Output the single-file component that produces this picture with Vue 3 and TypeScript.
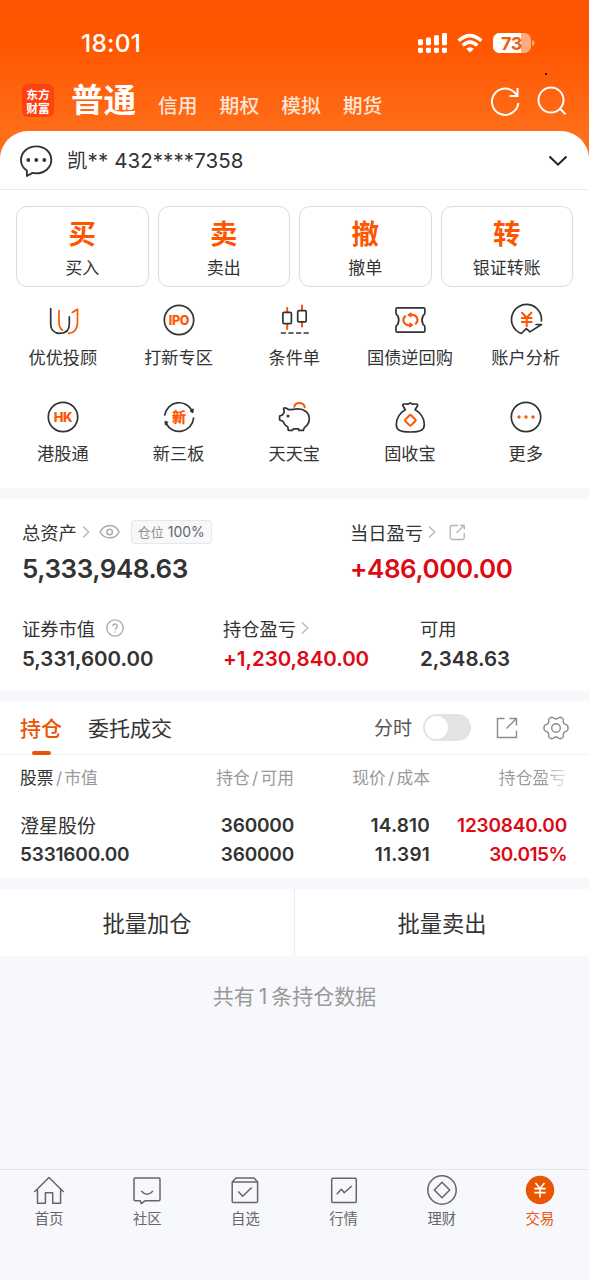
<script setup lang="ts">
interface Action { mark: string; label: string }
interface Entry { icon: string; label: string }

const markets: string[] = ['信用', '期权', '模拟', '期货']

const actions: Action[] = [
  { mark: '买', label: '买入' },
  { mark: '卖', label: '卖出' },
  { mark: '撤', label: '撤单' },
  { mark: '转', label: '银证转账' },
]

const services: Entry[] = [
  { icon: 'advisor', label: '优优投顾' },
  { icon: 'ipo', label: '打新专区' },
  { icon: 'candle', label: '条件单' },
  { icon: 'ticket', label: '国债逆回购' },
  { icon: 'analysis', label: '账户分析' },
  { icon: 'hk', label: '港股通' },
  { icon: 'neeq', label: '新三板' },
  { icon: 'pig', label: '天天宝' },
  { icon: 'bag', label: '固收宝' },
  { icon: 'more', label: '更多' },
]

const tabs: Entry[] = [
  { icon: 'home', label: '首页' },
  { icon: 'chat', label: '社区' },
  { icon: 'check', label: '自选' },
  { icon: 'chart', label: '行情' },
  { icon: 'wealth', label: '理财' },
  { icon: 'trade', label: '交易' },
]
</script>

<template>
  <div class="app">
    <header class="top">
      <div class="status">
        <span class="clock">18:01</span>
        <svg class="status-icons" width="120" height="24" viewBox="415 31 120 24">
          <g fill="#fff">
            <rect x="418" y="39.3" width="5" height="6" rx="1.4" />
            <rect x="426" y="37.5" width="5" height="7.8" rx="1.4" />
            <rect x="434" y="35.2" width="5" height="10.1" rx="1.4" />
            <rect x="442" y="33" width="5" height="12.3" rx="1.4" />
            <rect x="418" y="47.8" width="5" height="5.2" rx="1.4" />
            <rect x="426" y="47.8" width="5" height="5.2" rx="1.4" />
            <rect x="434" y="47.8" width="5" height="5.2" rx="1.4" />
            <rect x="442" y="47.8" width="5" height="5.2" rx="1.4" />
            <path d="M466.200 48.800 Q470 45.800 473.800 48.800 L470 52.600 Z" />
            <rect x="493" y="33" width="38" height="20" rx="6.500" opacity=".5" />
            <path d="M499.500 33 H521 V53 H499.500 A6.500 6.500 0 0 1 493 46.500 V39.500 A6.500 6.500 0 0 1 499.500 33 Z" />
            <path d="M532.200 40 Q534.600 40.500 534.600 43 Q534.600 45.500 532.200 46 Z" opacity=".5" />
          </g>
          <g fill="none" stroke="#fff" stroke-width="3.500">
            <path d="M458.600 40.800 Q470 30.500 481.400 40.800" />
            <path d="M462.600 45.400 Q470 38.800 477.400 45.400" />
          </g>
          <text x="511.500" y="49.600" text-anchor="middle" class="battery">73</text>
        </svg>
      </div>
      <div class="nav">
        <div class="logo"><span>东方</span><span>财富</span></div>
        <h1>普通</h1>
        <span v-for="m in markets" :key="m" class="market">{{ m }}</span>
        <svg class="nav-icons" width="80" height="36" viewBox="488 82 80 36" fill="none" stroke="#fff" stroke-width="2">
          <path d="M518.300 102 A13.200 13.200 0 1 1 513.800 90.700 L517.300 94.300" />
          <path d="M517.500 87 V95 H509.500" />
          <circle cx="551" cy="99" r="12.500" />
          <path d="M560.300 108 L565.500 113.300" />
        </svg>
        <i class="speck"></i>
      </div>
    </header>

    <main>
      <section class="panel">
        <div class="account">
          <svg width="34" height="34" viewBox="0 0 34 34" fill="none" stroke="#333" stroke-width="1.900" stroke-linejoin="round">
            <path d="M7.800 27.500 C4 25 2 21 2 17 C2 9.300 8.800 3.400 17.300 3.400 C25.800 3.400 32.300 9.300 32.300 17 C32.300 25 25 30.300 17 30.300 C15.500 30.300 14.500 30.200 13.500 29.900 L8 33 Z" />
            <g fill="#333" stroke="none"><circle cx="9.300" cy="17" r="1.900" /><circle cx="17.300" cy="17" r="1.900" /><circle cx="25.300" cy="17" r="1.900" /></g>
          </svg>
          <span class="acct-name">凯** 432****7358</span>
          <svg class="down" width="20" height="12" viewBox="0 0 20 12" fill="none" stroke="#222" stroke-width="2"><path d="M1.500 1.500 L10 9.700 L18.500 1.500" /></svg>
        </div>

        <div class="actions">
          <button v-for="a in actions" :key="a.label" class="action">
            <b>{{ a.mark }}</b><span>{{ a.label }}</span>
          </button>
        </div>

        <div class="services">
          <div v-for="s in services" :key="s.icon" class="service">
            <svg width="36" height="36" viewBox="0 0 36 36" fill="none" stroke="#333" stroke-width="1.700" stroke-linecap="round" stroke-linejoin="round">
              <template v-if="s.icon === 'advisor'">
                <path d="M5.700 6.500 V22 C5.700 28 9.500 31.400 14.800 31.400 C20.800 31.400 24.300 28 24.300 22 V14.800" />
                <path class="o" d="M14 8.300 V20 C14 24 15 26.500 17.600 28.200" />
                <path class="o" d="M27.200 10.400 L32.500 7.200 V20 C32.500 27.500 29.500 30.800 23.600 31.400" />
              </template>
              <template v-else-if="s.icon === 'ipo'">
                <circle cx="18" cy="18" r="14.700" />
                <text x="18" y="22.500" class="ipo">IPO</text>
              </template>
              <template v-else-if="s.icon === 'candle'">
                <path class="o" d="M11.200 6 V10 M11.200 22 V27 M26 3.500 V8 M26 20 V24.500" stroke-width="2" />
                <rect x="6.900" y="10.400" width="8.500" height="11.300" rx="1.200" />
                <rect x="21.700" y="8.600" width="8.500" height="11.300" rx="1.200" />
                <path d="M5.500 31 H9.300 M13.100 31 H16.900 M20.700 31 H24.500 M28.300 31 H32.100" />
              </template>
              <template v-else-if="s.icon === 'ticket'">
                <path d="M5.300 5.800 H31.500 Q32.900 5.800 32.900 7.200 V10.500 Q32.900 12.500 31 13.800 Q29 18 31 22.300 Q32.900 23.500 32.900 25.500 V28.700 Q32.900 30.100 31.500 30.100 H5.300 Q3.900 30.100 3.900 28.700 V25.500 Q3.900 23.500 5.800 22.300 Q7.800 18 5.800 13.800 Q3.900 12.500 3.900 10.500 V7.200 Q3.900 5.800 5.300 5.800 Z" />
                <g class="o" stroke-width="2">
                  <path d="M17.500 12.800 H20.500 C25.500 13.500 27 18.500 23.700 21.800" />
                  <path d="M19.300 23.200 H16.300 C11.300 22.500 9.800 17.500 13.100 14.200" />
                  <path d="M18.700 11 L15.800 12.900 L18.900 14.900 Z M18.100 21.100 L21 23.100 L17.900 25 Z" stroke-width="1" fill="#fe5500" />
                </g>
              </template>
              <template v-else-if="s.icon === 'analysis'">
                <path d="M33.400 19 A15 15 0 1 0 13.400 31.500 L18.300 26.700 L21.900 29.900 L33.500 22.500 H28" />
                <path class="o" d="M14 10.800 L18.700 15.800 L23.400 10.800 M18.700 16 V24.300 M13.800 16 H23.600 M13.800 20 H23.600" stroke-width="2" />
              </template>
              <template v-else-if="s.icon === 'hk'">
                <circle cx="18" cy="18" r="14.700" />
                <text x="18" y="22.500" class="hk">HK</text>
              </template>
              <template v-else-if="s.icon === 'neeq'">
                <path d="M3.700 16 A14.600 14.600 0 0 1 31 11.500 M32.600 19 A14.600 14.600 0 0 1 5.100 24.500" />
                <path d="M29.300 12.300 L32 13.800 L32.200 10.200 Z M6.800 23.200 L4 22.200 L4.200 25.700 Z" fill="#333" stroke-width="1" />
                <text x="18" y="23.200" class="xin">新</text>
              </template>
              <template v-else-if="s.icon === 'pig'">
                <path d="M12.800 10.700 C10.500 9 8.700 8.700 7.600 9.200 L8.200 13.300 L6.600 15.900 L3.600 17 V21 L6.900 22.300 C7.800 25 9.600 26.900 11.800 28 L12.300 31.400 H16.300 L17.500 29.800 H22.500 L23 31.400 H27.300 L28.300 28.800 C31.500 26.600 33.300 23.500 33.300 19.800 C33.300 13.500 28 9.900 22 9.900 C18.500 9.900 15.200 10.900 12.800 10.700" />
                <path class="o" d="M18.300 7.800 C19 2.500 28 2.500 28.700 8.300" stroke-width="2" />
                <circle cx="12" cy="17" r="1.500" fill="#333" stroke="none" />
              </template>
              <template v-else-if="s.icon === 'bag'">
                <path d="M13.300 10.800 L10.800 6.500 Q10.600 4.900 12.200 5 L15.700 5.200 L18.200 4 L20.700 5.200 L24.200 5 Q25.800 4.900 25.600 6.500 L23.100 10.800 C29 14 32.300 20 32.300 25.500 C32.300 30.800 29 33 18.300 33 C7.600 33 4.300 30.800 4.300 25.500 C4.300 20 7.600 14 13.300 10.800 Z" />
                <rect class="o" x="14.200" y="17.200" width="8.200" height="8.200" rx="1" transform="rotate(45 18.300 21.300)" stroke-width="2" />
              </template>
              <template v-else>
                <circle cx="18" cy="18" r="14.700" />
                <g fill="#fe5500" stroke="none"><circle cx="11" cy="18" r="1.700" /><circle cx="18" cy="18" r="1.700" /><circle cx="25" cy="18" r="1.700" /></g>
              </template>
            </svg>
            <span>{{ s.label }}</span>
          </div>
        </div>
      </section>

      <section class="assets">
        <div class="asset-main">
          <div>
            <div class="label">
              总资产
              <svg class="arrow" width="8" height="14" viewBox="0 0 8 14"><path d="M1 1.500 L6.800 7 L1 12.500" /></svg>
              <svg class="eye" width="22" height="16" viewBox="0 0 22 16"><path d="M1 8 C5.500 -.8 16.500 -.8 20 8 C16.500 15.800 5.500 15.800 1 8 Z" /><circle cx="10.600" cy="8" r="2.800" /></svg>
              <span class="badge"><em>仓位</em> 100%</span>
            </div>
            <div class="big">5,333,948.63</div>
          </div>
          <div>
            <div class="label">
              当日盈亏
              <svg class="arrow" width="8" height="14" viewBox="0 0 8 14"><path d="M1 1.500 L6.800 7 L1 12.500" /></svg>
              <svg class="share" width="17" height="17" viewBox="0 0 17 17"><path d="M9 1.500 H3 Q1.200 1.500 1.200 3.300 V13.700 Q1.200 15.500 3 15.500 H13.400 Q15.200 15.500 15.200 13.700 V9 M7.500 9 L15 1.500 M11 1.300 H15.300 V5.600" /></svg>
            </div>
            <div class="big red">+486,000.00</div>
          </div>
        </div>
        <div class="asset-sub">
          <div>
            <div class="label">
              证券市值
              <svg class="help" width="18" height="18" viewBox="0 0 18 18"><circle cx="9" cy="9" r="8.200" /><path d="M6.800 7.300 C6.800 4.200 11.400 4.300 11.300 7.200 C11.300 9 9.100 9 9.100 11 M9.100 12.300 V13.600" /></svg>
            </div>
            <div class="mid">5,331,600.00</div>
          </div>
          <div>
            <div class="label">
              持仓盈亏
              <svg class="arrow" width="8" height="14" viewBox="0 0 8 14"><path d="M1 1.500 L6.800 7 L1 12.500" /></svg>
            </div>
            <div class="mid red">+1,230,840.00</div>
          </div>
          <div>
            <div class="label">可用</div>
            <div class="mid">2,348.63</div>
          </div>
        </div>
      </section>

      <section class="holdings">
        <div class="hold-tabs">
          <span class="tab active">持仓</span>
          <span class="tab">委托成交</span>
          <span class="minute">分时</span>
          <i class="switch"></i>
          <svg class="export" width="22" height="22" viewBox="0 0 22 22"><path d="M8.500 1.500 H1.500 V20.500 H20.500 V13.500 M10.500 11.500 L20.200 1.800 M13.500 1.500 H20.500 V8.500" /></svg>
          <svg class="gear" width="26" height="26" viewBox="0 0 26 26">
            <path d="M10.100 2.800 Q13 5.300 15.900 2.800 Q16.900 1.900 18.100 2.500 L19.700 3.500 Q20.600 4.200 20.300 5.400 Q19.700 8.700 23.100 9.700 Q24.400 10.200 24.900 11.500 Q25.200 13 24.900 14.500 Q24.400 15.800 23.100 16.300 Q19.700 17.300 20.300 20.600 Q20.600 21.800 19.700 22.500 L18.100 23.500 Q16.900 24.100 15.900 23.200 Q13 20.700 10.100 23.200 Q9.100 24.100 7.900 23.500 L6.300 22.500 Q5.400 21.800 5.700 20.600 Q6.300 17.300 2.900 16.300 Q1.600 15.800 1.100 14.500 Q.8 13 1.100 11.500 Q1.600 10.200 2.900 9.700 Q6.300 8.700 5.700 5.400 Q5.400 4.200 6.300 3.500 L7.900 2.500 Q9.100 1.900 10.100 2.800 Z" />
            <circle cx="13" cy="13" r="4.300" />
          </svg>
        </div>
        <div class="row head">
          <span><strong>股票</strong><s>/</s>市值</span><span>持仓<s>/</s>可用</span><span>现价<s>/</s>成本</span><span class="fade">持仓盈亏</span>
        </div>
        <div class="row first">
          <span class="stock">澄星股份</span><span>360000</span><span class="price">14.810</span><span class="red">1230840.00</span>
        </div>
        <div class="row">
          <span>5331600.00</span><span>360000</span><span class="price">11.391</span><span class="red ratio">30.015%</span>
        </div>
      </section>

      <div class="batch"><button>批量加仓</button><button>批量卖出</button></div>
      <p class="total">共有<span>1</span>条持仓数据</p>
    </main>

    <nav class="tabbar">
      <div v-for="t in tabs" :key="t.icon" class="tab-item" :class="{ on: t.icon === 'trade' }">
        <svg width="32" height="32" viewBox="0 0 32 32" fill="none" stroke="#666" stroke-width="1.500" stroke-linejoin="round">
          <path v-if="t.icon === 'home'" d="M1.300 18 L16 3.500 L30.700 18 M4.500 15.500 V29.300 H12.400 V18.700 H19.700 V29.300 H27.600 V15.500" />
          <path v-else-if="t.icon === 'chat'" d="M4.200 4 H27.800 Q29 4 29 5.200 V25.500 Q29 26.700 27.800 26.700 H14.500 L10.200 29.500 L9.200 26.700 H4.200 Q3 26.700 3 25.500 V5.200 Q3 4 4.200 4 Z M10.300 17 Q16 23.500 22 17" />
          <path v-else-if="t.icon === 'check'" d="M3.200 8 H28.600 M3.200 8 L6.900 4.100 H25.100 L28.600 8 V27.200 Q28.600 28.600 27.200 28.600 H4.600 Q3.200 28.600 3.200 27.200 Z M9.300 17.500 L13.700 22.200 L22.700 13.500" />
          <path v-else-if="t.icon === 'chart'" d="M4.700 4.200 H27.300 Q28.300 4.200 28.300 5.200 V27.600 Q28.300 28.600 27.300 28.600 H4.700 Q3.700 28.600 3.700 27.600 V5.200 Q3.700 4.200 4.700 4.200 Z M8.700 20.300 L13.400 15.200 L16.300 18.700 L23.700 12" />
          <template v-else-if="t.icon === 'wealth'">
            <circle cx="16" cy="16" r="14.200" />
            <path d="M16 8.300 L23.700 16 L16 23.700 L8.300 16 Z" />
          </template>
          <template v-else>
            <circle cx="16" cy="16" r="14.200" fill="#ea5504" stroke="none" />
            <path d="M11.500 9 L16 14.500 L20.500 9 M16 14.500 V23.500 M10.300 14.600 H21.700 M10.300 18.600 H21.700" stroke="#fff" stroke-width="1.600" />
          </template>
        </svg>
        <span>{{ t.label }}</span>
      </div>
    </nav>
  </div>
</template>

<style>
body { background: #f7f8fb; }
</style>

<style scoped>
* { box-sizing: border-box; }
.app {
  width: 589px; height: 1280px; display: flex; flex-direction: column;
  background: #f7f8fb; color: #333; overflow: hidden;
  font-family: Inter, "Noto Sans CJK SC", sans-serif;
}
svg { display: block; flex: none; }
button { border: 0; background: #fff; color: inherit; font-family: inherit; padding: 0; }
.red { color: #dd0a16; }

.top {
  height: 163px; margin-bottom: -32px; flex: none; color: #fff;
  background: linear-gradient(#ff5500 0, #ff5600 45px, #ff6d19 131px, #ff701e 163px);
}
.status { height: 67px; padding: 20px 54px 0 81px; display: flex; justify-content: space-between; }
.clock { font-size: 24.500px; line-height: 47px; font-weight: 500; letter-spacing: .25px; }
.status-icons { margin-top: 11px; }
.battery { font: 700 18px Inter, sans-serif; fill: #e8600f; letter-spacing: -.3px; }
.nav { height: 64px; display: flex; align-items: center; padding: 3px 21px 0 22px; position: relative; }
.logo {
  width: 32px; height: 33px; border-radius: 6px; background: #ff4010;
  display: flex; flex-direction: column; align-items: center; justify-content: center;
  font-family: "Noto Sans CJK SC", sans-serif; font-weight: 700; font-size: 11.800px; line-height: 14px;
}
.logo span { height: 14px; }
h1 { margin: 0 22px 0 17px; font-size: 32.500px; line-height: 40px; font-weight: 700; }
.market { font-size: 19.800px; line-height: 30px; margin: 11px 22px 0 0; font-weight: 500; color: #ffe4d6; }
.nav-icons { margin-left: auto; }
.speck { position: absolute; left: 545px; top: 6px; width: 2px; height: 2px; background: #222; }

main { display: flex; flex-direction: column; }
.panel { height: 357px; background: #fff; border-radius: 28px 28px 0 0; }
.account { height: 59px; padding: 0 21px 0 19px; display: flex; align-items: center; border-bottom: 1px solid #ececee; }
.acct-name { margin: 2px 0 0 14px; font-size: 20.500px; line-height: 30px; letter-spacing: .08px; }
.down { margin-left: auto; margin-top: 1px; }
.actions { padding: 16px 16px 0; display: grid; grid-template-columns: repeat(4, 1fr); gap: 9px; }
.action { height: 81px; border: 1px solid #dcdcdf; border-radius: 11px; display: flex; flex-direction: column; align-items: center; }
.action b { margin-top: 8px; font-size: 27.500px; line-height: 38px; font-weight: 700; color: #fe5500; }
.action span { margin-top: 2px; font-size: 17px; line-height: 26px; }
.services { padding: 15px 5.500px 0 5px; display: grid; grid-template-columns: repeat(5, 1fr); grid-auto-rows: 96.500px; }
.service { display: flex; flex-direction: column; align-items: center; font-size: 17.200px; line-height: 26px; }
.service span { margin-top: 6.500px; }
.o { stroke: #fe5500; }
.service text { fill: #fe5500; stroke: none; text-anchor: middle; font-family: Inter, "Noto Sans CJK SC", sans-serif; font-weight: 800; }
.service text.ipo { font-size: 12.500px; letter-spacing: -.3px; }
.service text.hk { font-size: 13px; letter-spacing: -.3px; }
.service text.xin { font-size: 14px; }

.assets { height: 192px; margin-top: 11px; background: #fff; padding: 18px 22px 0; }
.asset-main { height: 96px; display: grid; grid-template-columns: 328px 1fr; }
.asset-sub { display: grid; grid-template-columns: 201px 197px 1fr; }
.label { height: 30px; display: flex; align-items: center; font-size: 18.300px; white-space: nowrap; }
.label svg { fill: none; stroke: #b5b5b8; stroke-width: 1.300; }
.label .arrow { margin-left: 5px; }
.label .eye { margin-left: 9px; stroke: #aaa; stroke-width: 1.500; }
.label .share { margin-left: 13px; }
.label .help { margin-left: 11px; stroke: #aaa; }
.badge {
  margin-left: 10px; width: 81px; height: 24px; border: 1px solid #e6e7eb; border-radius: 3px;
  background: #f7f8fa; color: #666; font-size: 14px; line-height: 22px; text-align: center;
}
.badge em { font-style: normal; font-size: 13px; color: #8f8f92; }
.big { font-size: 26px; line-height: 32px; margin-top: 6px; font-weight: 600; letter-spacing: -.45px; }
.mid { font-size: 20.500px; line-height: 28px; margin-top: 2px; font-weight: 600; letter-spacing: -.03px; }

.holdings { height: 177px; margin-top: 10px; background: #fff; }
.hold-tabs { height: 54px; display: flex; align-items: center; padding: 0 20px; border-bottom: 1px solid #f1f1f3; }
.tab { position: relative; font-size: 21px; height: 53px; line-height: 55px; margin-right: 26px; }
.tab.active { color: #ea5504; font-weight: 500; }
.tab.active::after { content: ""; position: absolute; left: 12px; bottom: -1px; width: 19px; height: 4px; border-radius: 2px; background: #ea5504; }
.minute { margin-left: auto; font-size: 19px; height: 28px; line-height: 29px; color: #555; }
.switch { width: 48px; height: 27px; margin-left: 11px; border-radius: 14px; background: #e3e3e5; padding: 2px; }
.switch::before { content: ""; display: block; width: 23px; height: 23px; border-radius: 50%; background: #fff; }
.export, .gear { fill: none; stroke: #8b8b8e; stroke-width: 1.400; }
.export { margin-left: 25px; }
.gear { margin-left: 25px; }
.row { display: grid; grid-template-columns: 140px 134px 136px 137px; padding: 0 22px 0 20px; font-size: 19px; line-height: 29px; font-weight: 600; letter-spacing: -.2px; }
.row span:not(:first-child) { text-align: right; }
.head { height: 44px; font-size: 16.800px; line-height: 46px; font-weight: 400; letter-spacing: 0; color: #999; }
.head strong { color: #333; font-weight: 400; }
.head s { text-decoration: none; margin: 0 2.300px; }
.head .fade { margin-right: 1px; background: linear-gradient(90deg, #999 83%, #e8e8e8 100%); background-clip: text; color: transparent; }
.first { margin-top: 12px; }
.row .stock { height: 29px; line-height: 31px; font-weight: 400; letter-spacing: 0; }
.price { letter-spacing: .2px; }
.ratio { letter-spacing: -.5px; }

.batch { height: 67px; margin-top: 11px; display: grid; grid-template-columns: 1fr 1fr; gap: 1px; background: #eeeef1; }
.batch button { font-size: 22.300px; line-height: 65px; padding-top: 2px; }
.total { margin: 26px 0 0; text-align: center; font-size: 21px; line-height: 30px; color: #999; }
.total span { margin: 0 4px; }

.tabbar { height: 111px; margin-top: auto; flex: none; border-top: 1px solid #e4e5e8; display: grid; grid-template-columns: repeat(6, 1fr); padding: 4px 0 0; }
.tab-item { display: flex; flex-direction: column; align-items: center; font-size: 14.300px; line-height: 22px; color: #666; }
.tab-item span { margin-top: 2px; }
.tab-item.on { color: #ea5504; }
</style>
